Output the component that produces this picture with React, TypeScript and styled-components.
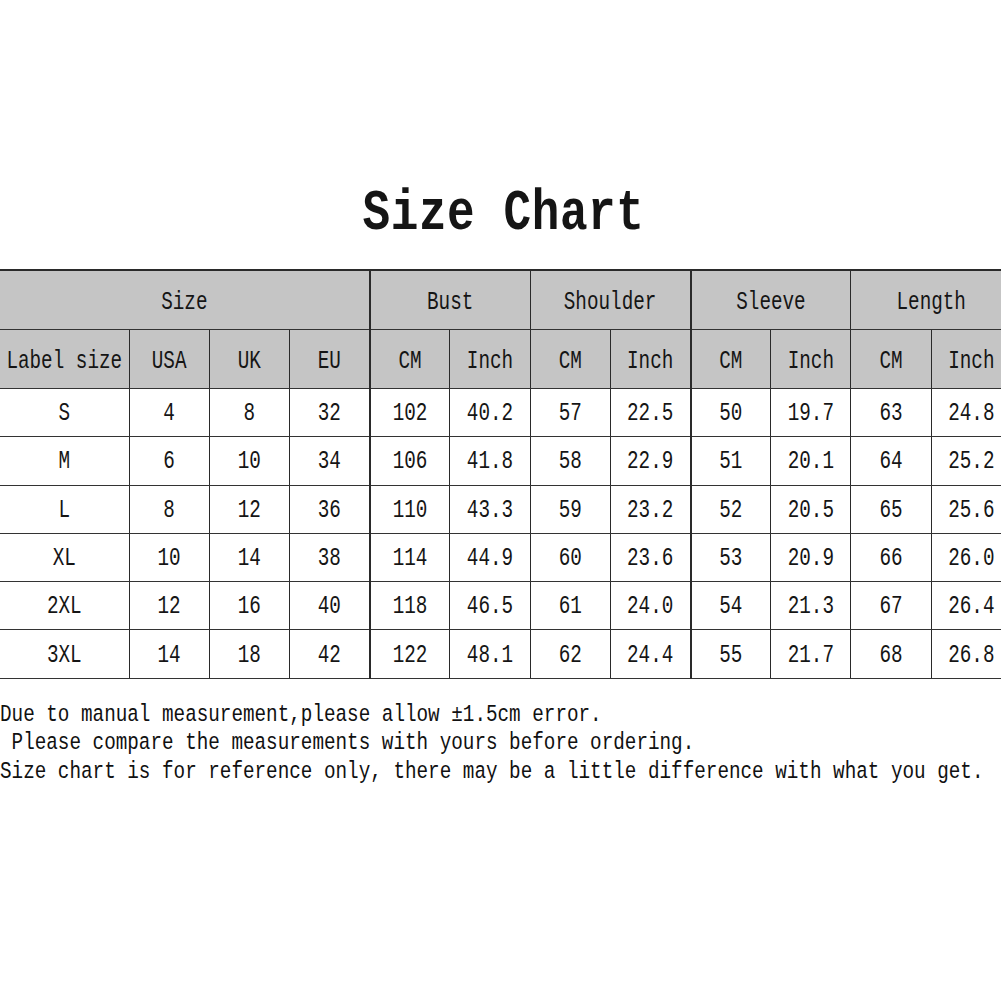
import React from 'react'
import styled, { createGlobalStyle } from 'styled-components'

const GlobalStyle = createGlobalStyle`
  html, body {
    margin: 0;
    padding: 0;
    background: #ffffff;
  }
`

const Page = styled.div`
  width: 1001px;
  height: 1001px;
  overflow: hidden;
  background: #fff;
  color: #151515;
  font-family: "Liberation Mono", "DejaVu Sans Mono", monospace;
  padding-top: 184px;
  box-sizing: border-box;
`

const Title = styled.h1`
  margin: 0;
  height: 60px;
  line-height: 60px;
  text-align: center;
  font-family: "Liberation Mono", monospace;
  font-weight: 700;
  font-size: 46px;
  transform: scaleY(1.25);
  letter-spacing: 0.6px;
  padding-left: 6px;
`

const TableWrap = styled.div`
  margin-top: 25px;
  width: 1001px;
  overflow: hidden;
`

const Table = styled.table`
  border-collapse: collapse;
  table-layout: fixed;
  width: 1012px;
  border-top: 2px solid #2a2a2a;
  border-bottom: 1px solid #2a2a2a;
`

const Cell = styled.td<{ $head?: boolean; $h: number; $thick?: boolean }>`
  height: ${p => p.$h}px;
  padding: ${p => (p.$head ? '4px 0 0' : '1px 0 0')};
  text-align: center;
  vertical-align: middle;
  background: ${p => (p.$head ? '#c5c5c5' : '#ffffff')};
  border: 1px solid #333;
  border-top: none;
  border-left: none;
  border-right: ${p => (p.$thick ? '2px' : '1px')} solid #2a2a2a;
  font-size: 19.3px;
  font-weight: 400;
  white-space: nowrap;
`

const Glyphs = styled.span`
  display: inline-block;
  transform: scaleY(1.3);
`

const Notes = styled.div`
  margin-top: 22px;
  font-size: 19.3px;
  line-height: 28.5px;
  white-space: pre;
  color: #111;
`

const NoteLine = styled.div`
  transform: scaleY(1.2);
  transform-origin: left center;
`

const groups = ['Bust', 'Shoulder', 'Sleeve', 'Length']

const rows = [
  ['S', '4', '8', '32', '102', '40.2', '57', '22.5', '50', '19.7', '63', '24.8'],
  ['M', '6', '10', '34', '106', '41.8', '58', '22.9', '51', '20.1', '64', '25.2'],
  ['L', '8', '12', '36', '110', '43.3', '59', '23.2', '52', '20.5', '65', '25.6'],
  ['XL', '10', '14', '38', '114', '44.9', '60', '23.6', '53', '20.9', '66', '26.0'],
  ['2XL', '12', '16', '40', '118', '46.5', '61', '24.0', '54', '21.3', '67', '26.4'],
  ['3XL', '14', '18', '42', '122', '48.1', '62', '24.4', '55', '21.7', '68', '26.8'],
]

const thickAfter = (i: number) => i === 3 || i === 7

const App = () => {
  return (
    <>
      <GlobalStyle />
      <Page>
        <Title>Size Chart</Title>
        <TableWrap>
          <Table>
            <colgroup>
              <col style={{ width: 129 }} />
              {Array.from({ length: 11 }).map((_, i) => (
                <col key={i} style={{ width: 80.2 }} />
              ))}
            </colgroup>
            <tbody>
              <tr>
                <Cell as="th" colSpan={4} $head $h={54} $thick>
                  <Glyphs>Size</Glyphs>
                </Cell>
                {groups.map((g, i) => (
                  <Cell as="th" key={g} colSpan={2} $head $h={54} $thick={i === 1}>
                    <Glyphs>{g}</Glyphs>
                  </Cell>
                ))}
              </tr>
              <tr>
                {['Label size', 'USA', 'UK', 'EU'].map((t, i) => (
                  <Cell as="th" key={t} $head $h={54} $thick={thickAfter(i)}>
                    <Glyphs>{t}</Glyphs>
                  </Cell>
                ))}
                {groups.map((g, gi) =>
                  ['CM', 'Inch'].map((t, i) => (
                    <Cell as="th" key={g + t} $head $h={54} $thick={thickAfter(4 + gi * 2 + i)}>
                      <Glyphs>{t}</Glyphs>
                    </Cell>
                  ))
                )}
              </tr>
              {rows.map(r => (
                <tr key={r[0]}>
                  {r.map((v, i) => (
                    <Cell key={i} $h={46.3} $thick={thickAfter(i)}>
                      <Glyphs>{v}</Glyphs>
                    </Cell>
                  ))}
                </tr>
              ))}
            </tbody>
          </Table>
        </TableWrap>
        <Notes>
          <NoteLine>Due to manual measurement,please allow ±1.5cm error.</NoteLine>
          <NoteLine> Please compare the measurements with yours before ordering.</NoteLine>
          <NoteLine>Size chart is for reference only, there may be a little difference with what you get.</NoteLine>
        </Notes>
      </Page>
    </>
  )
}

export default App
